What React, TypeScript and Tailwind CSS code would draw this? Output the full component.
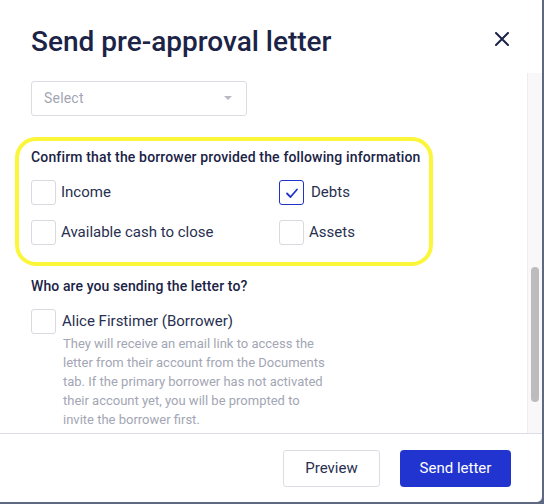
import React from "react";

function Box({ checked = false }: { checked?: boolean }) {
  return (
    <div
      className={
        "w-[25px] h-[25px] shrink-0 rounded-[3px] border bg-white flex items-center justify-center " +
        (checked ? "border-[#2233cc]" : "border-[#d9dae0]")
      }
    >
      {checked && (
        <svg width="16" height="16" viewBox="0 0 16 16" fill="none">
          <path d="M3 8.5 L6.5 12 L13 4.5" stroke="#2233cc" strokeWidth="1.8" strokeLinecap="round" strokeLinejoin="round" />
        </svg>
      )}
    </div>
  );
}

function Item({ label, checked, gap = "gap-[5px]" }: { label: string; checked?: boolean; gap?: string }) {
  return (
    <div className={"flex items-center " + gap}>
      <Box checked={checked} />
      <span className="text-[15px] text-[#283050]">{label}</span>
    </div>
  );
}

export default function App() {
  return (
    <div className="w-[544px] h-[504px] bg-[#5f6883] overflow-hidden" style={{ fontFamily: "Roboto, 'Liberation Sans', sans-serif" }}>
      <div className="w-[542px] h-[502px] bg-white rounded-br-[5px] flex flex-col overflow-hidden">
        <div className="h-[73px] shrink-0 flex items-start justify-between pl-[31px] pr-[33px] pt-[24px]">
          <h1 className="text-[28px] leading-[36px] font-medium text-[#1b2346]">Send pre-approval letter</h1>
          <svg width="14" height="14" viewBox="0 0 14 14" className="mt-[8px]">
            <path d="M1 1 L13 13 M13 1 L1 13" stroke="#1b2346" strokeWidth="2" strokeLinecap="round" />
          </svg>
        </div>
        <div className="flex-1 flex min-h-0">
          <div className="flex-1 overflow-hidden pt-[8px]">
            <div className="pl-[31px]">
              <div className="w-[216px] h-[35px] border border-[#dcdde3] rounded-[3px] flex items-center justify-between pl-[12px] pr-[14px]">
                <span className="text-[14px] text-[#a3a6b4] tracking-[0.2px]">Select</span>
                <svg width="8" height="5" viewBox="0 0 8 5"><path d="M0 0 L8 0 L4 4 Z" fill="#b7b9c3" /></svg>
              </div>
            </div>
            <div className="mt-[21px] ml-[15px] w-[418px] h-[129px] border-[4px] border-[#fcf63a] rounded-[21px] pl-[12px] pt-[6px]">
              <div className="text-[14px] leading-[20px] font-medium text-[#1b2346] tracking-[0.15px]">
                Confirm that the borrower provided the following information
              </div>
              <div className="grid grid-cols-[248px_1fr] gap-y-[15px] mt-[13px]">
                <Item label="Income" />
                <Item label="Debts" checked gap="gap-[7px]" />
                <Item label="Available cash to close" />
                <Item label="Assets" gap="gap-[5px]" />
              </div>
            </div>
            <div className="pl-[31px] mt-[10px]">
              <div className="text-[14px] leading-[20px] font-medium text-[#1b2346] tracking-[0.1px]">
                Who are you sending the letter to?
              </div>
              <div className="mt-[13px]">
                <Item label="Alice Firstimer (Borrower)" gap="gap-[6px]" />
              </div>
              <p className="ml-[32px] mt-0 w-[264px] text-[13px] leading-[19px] text-[#a3a6b4]">
                They will receive an email link to access the letter from their account from the Documents tab. If the primary borrower has not activated their account yet, you will be prompted to invite the borrower first.
              </p>
            </div>
          </div>
          <div className="w-[15px] shrink-0 bg-[#f8f8f8] border-l border-[#ededed] flex flex-col pt-[194px] items-center">
            <div className="w-[8px] h-[135px] rounded-full bg-[#bcbcbc]"></div>
          </div>
        </div>
        <div className="h-[69px] shrink-0 border-t border-[#dddee3] flex items-center justify-end gap-[20px] pr-[31px]">
          <button className="w-[97px] h-[37px] rounded-[3px] border border-[#dcdde3] bg-white text-[15px] text-[#283050]">Preview</button>
          <button className="w-[111px] h-[37px] rounded-[4px] bg-[#2234d0] text-[15px] text-white">Send letter</button>
        </div>
      </div>
    </div>
  );
}
